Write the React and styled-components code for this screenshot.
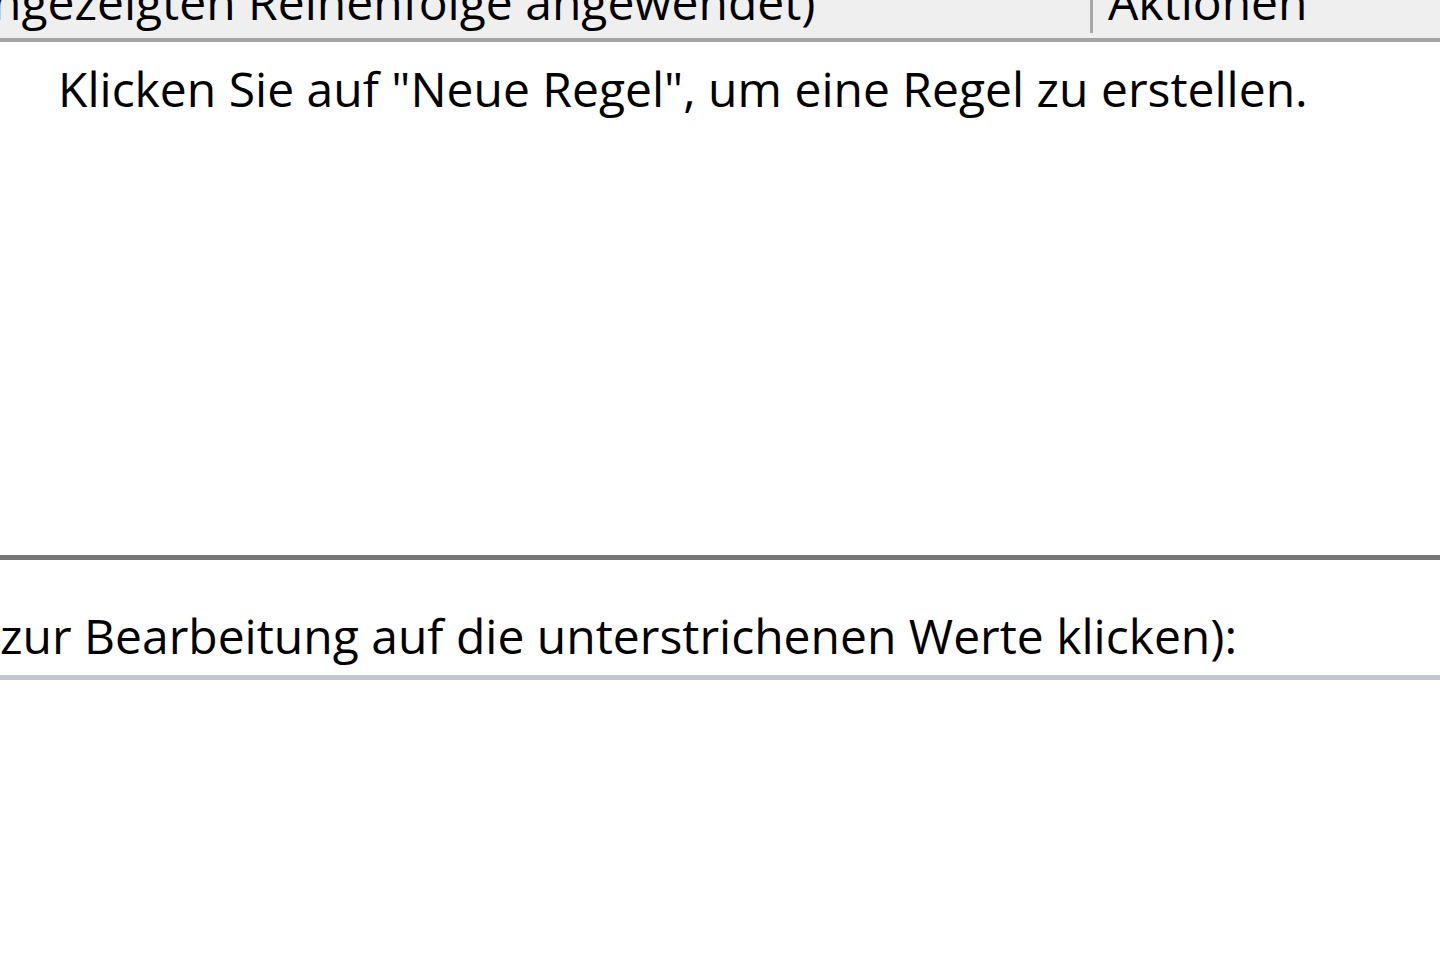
import styled, { createGlobalStyle } from "styled-components";

const GlobalStyle = createGlobalStyle`
  html, body {
    margin: 0;
    padding: 0;
    background: #ffffff;
  }
  body {
    font-family: "Open Sans", "Noto Sans", sans-serif;
    color: #000000;
    overflow: hidden;
  }
`;

const Dialog = styled.div`
  width: 1440px;
  height: 959px;
  display: flex;
  flex-direction: column;
  background: #ffffff;
  overflow: hidden;
  font-size: 48px;
`;

const ListBox = styled.div`
  height: 555px;
  display: flex;
  flex-direction: column;
  border-bottom: 5px solid #767676;
`;

const HeaderRow = styled.div`
  height: 38px;
  display: flex;
  background: #efefef;
  border-bottom: 4px solid #a3a3a3;
  overflow: hidden;
`;

const HeaderCell = styled.div`
  width: ${(p) => p.width || "auto"};
  flex: ${(p) => (p.width ? "none" : "1")};
  display: flex;
  align-items: flex-end;
  overflow: hidden;
  border-right: ${(p) => (p.divider ? "3px solid #a6a6a6" : "none")};
  height: ${(p) => (p.divider ? "33px" : "38px")};
  padding-left: ${(p) => p.pad || "0px"};
  box-sizing: border-box;
`;

const HeaderText = styled.span`
  white-space: nowrap;
  line-height: 1;
  margin-bottom: ${(p) => p.lift || "12px"};
  margin-left: ${(p) => p.shift || "0px"};
`;

const EmptyHint = styled.div`
  padding: 23px 0 0 58px;
  line-height: 1;
  white-space: nowrap;
`;

const Description = styled.div`
  display: flex;
  flex-direction: column;
`;

const DescLabel = styled.div`
  height: 120px;
  display: flex;
  align-items: flex-end;
  white-space: nowrap;
  line-height: 1;
  padding-bottom: 15px;
  border-bottom: 5px solid #c5c5cd;
  box-sizing: border-box;
`;

const DescBody = styled.div`
  flex: 1;
`;

export default function App() {
  return (
    <>
      <GlobalStyle />
      <Dialog>
        <ListBox>
          <HeaderRow>
            <HeaderCell width="1093px" divider>
              <HeaderText lift="7px" shift="-8px">ngezeigten Reihenfolge angewendet)</HeaderText>
            </HeaderCell>
            <HeaderCell pad="15px">
              <HeaderText>Aktionen</HeaderText>
            </HeaderCell>
          </HeaderRow>
          <EmptyHint>Klicken Sie auf "Neue Regel", um eine Regel zu erstellen.</EmptyHint>
        </ListBox>
        <Description>
          <DescLabel>zur Bearbeitung auf die unterstrichenen Werte klicken):</DescLabel>
          <DescBody />
        </Description>
      </Dialog>
    </>
  );
}
